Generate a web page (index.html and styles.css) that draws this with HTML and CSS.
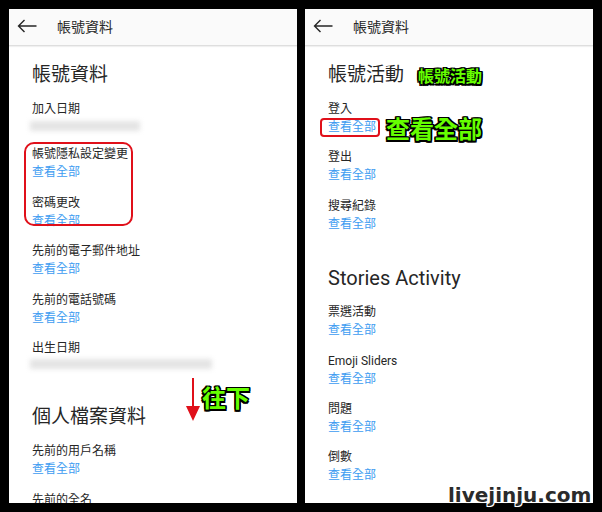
FILE: index.html
```html
<!DOCTYPE html>
<html lang="zh-Hant">
<head>
<meta charset="utf-8">
<title>帳號資料</title>
<link rel="stylesheet" href="styles.css">
</head>
<body>
<div class="screen">
  <section class="panel">
    <header class="bar">
      <svg class="back" width="20" height="14" viewBox="0 0 20 14"><path d="M19.5 7H1.5M7.5 1L1.5 7l6 6" fill="none" stroke="#262626" stroke-width="1.4"/></svg>
      <span class="bar-title">帳號資料</span>
    </header>
    <div class="content">
      <h2 class="heading">帳號資料</h2>
      <div class="item"><div class="label">加入日期</div><div class="blur-row"><span class="blur blur-short"></span></div></div>
      <div class="item"><div class="label">帳號隱私設定變更</div><a class="link">查看全部</a></div>
      <div class="item"><div class="label">密碼更改</div><a class="link">查看全部</a></div>
      <div class="item"><div class="label">先前的電子郵件地址</div><a class="link">查看全部</a></div>
      <div class="item"><div class="label">先前的電話號碼</div><a class="link">查看全部</a></div>
      <div class="item"><div class="label">出生日期</div><div class="blur-row"><span class="blur blur-long"></span></div></div>
      <h2 class="heading heading-next">個人檔案資料</h2>
      <div class="item"><div class="label">先前的用戶名稱</div><a class="link">查看全部</a></div>
      <div class="item"><div class="label">先前的全名</div></div>
    </div>
    <div class="ring ring-big"></div>
    <div class="arrow"><span class="arrow-line"></span><span class="arrow-head"></span></div>
    <div class="note note-down">往下</div>
  </section>

  <section class="panel">
    <header class="bar">
      <svg class="back" width="20" height="14" viewBox="0 0 20 14"><path d="M19.5 7H1.5M7.5 1L1.5 7l6 6" fill="none" stroke="#262626" stroke-width="1.4"/></svg>
      <span class="bar-title">帳號資料</span>
    </header>
    <div class="content">
      <h2 class="heading">帳號活動</h2>
      <div class="item"><div class="label">登入</div><a class="link">查看全部</a></div>
      <div class="item"><div class="label">登出</div><a class="link">查看全部</a></div>
      <div class="item"><div class="label">搜尋紀錄</div><a class="link">查看全部</a></div>
      <h2 class="heading heading-next heading-latin">Stories Activity</h2>
      <div class="item"><div class="label">票選活動</div><a class="link">查看全部</a></div>
      <div class="item"><div class="label">Emoji Sliders</div><a class="link">查看全部</a></div>
      <div class="item"><div class="label">問題</div><a class="link">查看全部</a></div>
      <div class="item"><div class="label">倒數</div><a class="link">查看全部</a></div>
    </div>
    <div class="note note-section">帳號活動</div>
    <div class="ring ring-small"></div>
    <div class="note note-all">查看全部</div>
  </section>
</div>
<div class="watermark">livejinju.com</div>
</body>
</html>
```

FILE: styles.css
```css
* { box-sizing: border-box; }

html, body {
  margin: 0;
  padding: 0;
  background: #000;
}

body {
  width: 602px;
  height: 512px;
  position: relative;
  overflow: hidden;
  font-family: Roboto, "Noto Sans CJK TC", sans-serif;
  color: #262626;
}

.screen {
  display: flex;
  gap: 8px;
  padding: 9px;
  height: 512px;
}

.panel {
  position: relative;
  width: 288px;
  height: 494px;
  background: #fff;
  overflow: hidden;
  display: flex;
  flex-direction: column;
}

.bar {
  flex: none;
  height: 37px;
  background: #fafafa;
  border-bottom: 1px solid #dedede;
  box-shadow: 0 1px 1px rgba(0, 0, 0, 0.06);
  display: flex;
  align-items: center;
  padding: 0 0 2px 8px;
}

.back {
  display: block;
  flex: none;
}

.bar-title {
  margin-left: 20px;
  font-family: "Noto Sans CJK TC", sans-serif;
  font-size: 14px;
  line-height: 20px;
  color: #262626;
}

.content {
  display: flex;
  flex-direction: column;
  align-items: flex-start;
  padding: 15px 23px 0;
}

.heading {
  margin: 0 0 11px;
  font-family: Roboto, "Noto Sans CJK TC", sans-serif;
  font-weight: 400;
  font-size: 19px;
  line-height: 28px;
  color: #262626;
}

.heading-next {
  margin-top: 19px;
}

.heading-latin {
  font-size: 20px;
}

.item {
  margin-bottom: 12.4px;
}

.label {
  font-size: 12px;
  line-height: 18px;
  color: #262626;
  white-space: nowrap;
}

.link {
  display: block;
  font-size: 12px;
  line-height: 18px;
  color: #3d9cf1;
}

.blur-row {
  height: 15px;
  display: flex;
  align-items: center;
}

.blur {
  display: block;
  height: 10px;
  background: #e4e4e4;
  filter: blur(2.5px);
  margin-left: -2px;
}

.blur-short { width: 110px; }
.blur-long { width: 182px; }

/* annotations */
.ring {
  position: absolute;
  border: 2px solid #e0101a;
  border-radius: 10px;
}

.ring-big {
  left: 15px;
  top: 133px;
  width: 109px;
  height: 84px;
}

.ring-small {
  left: 15px;
  top: 109px;
  width: 60px;
  height: 19px;
  border-radius: 4px;
}

.arrow {
  position: absolute;
  left: 177px;
  top: 369px;
  width: 14px;
  height: 43px;
  display: flex;
  flex-direction: column;
  align-items: center;
}

.arrow-line {
  width: 2px;
  height: 28px;
  background: #e0101a;
}

.arrow-head {
  width: 0;
  height: 0;
  border-left: 7px solid transparent;
  border-right: 7px solid transparent;
  border-top: 15px solid #e0101a;
}

.note {
  position: absolute;
  font-family: "Noto Sans CJK TC", sans-serif;
  font-weight: 700;
  color: #66ff00;
  text-shadow:
    -1.5px -1.5px 0 #000, 1.5px -1.5px 0 #000,
    -1.5px 1.5px 0 #000, 1.5px 1.5px 0 #000,
    0 -1.5px 0 #000, 0 1.5px 0 #000,
    -1.5px 0 0 #000, 1.5px 0 0 #000;
  white-space: nowrap;
}

.note-down {
  left: 193px;
  top: 374px;
  font-size: 24px;
  line-height: 28px;
}

.note-section {
  left: 113px;
  top: 56px;
  font-size: 16px;
  line-height: 20px;
}

.note-all {
  left: 81px;
  top: 105px;
  font-size: 24px;
  line-height: 28px;
}

.watermark {
  position: absolute;
  left: 448px;
  top: 483px;
  font-family: "DejaVu Sans", sans-serif;
  font-weight: 700;
  font-size: 20px;
  line-height: 24px;
  color: #2b2b2b;
  text-shadow:
    -1px -1px 0 #fff, 1px -1px 0 #fff,
    -1px 1px 0 #fff, 1px 1px 0 #fff,
    0 0 2px #fff;
}
```
